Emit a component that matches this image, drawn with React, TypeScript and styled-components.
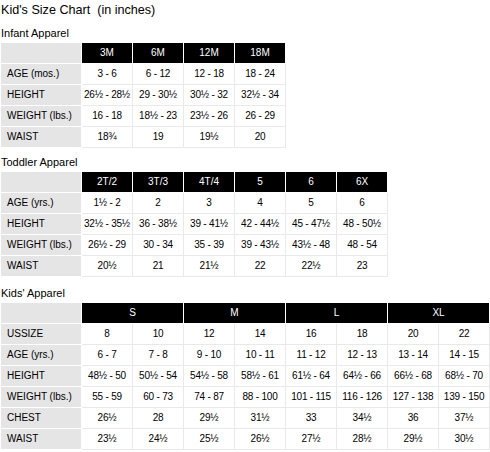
import React from 'react'
import styled, { createGlobalStyle } from 'styled-components';

const GlobalStyle = createGlobalStyle`
  body {
    margin: 0;
    background: #fff;
    font-family: "Liberation Sans", Arial, sans-serif;
    color: #000;
  }
`

const Page = styled.div`
  width: 490px;
`

const Title = styled.h1`
  margin: 0;
  padding: 3px 0 0 1px;
  font-size: 12.6px;
  font-weight: normal;
  line-height: 15px;
  white-space: pre;
`

const Section = styled.section`
  margin-top: ${(p: { $gap: number }) => p.$gap}px;
`

const SectionLabel = styled.div`
  font-size: 11px;
  line-height: 13px;
  padding-left: 1px;
  margin-bottom: 2px;
`

const Chart = styled.table`
  border-collapse: separate;
  border-spacing: 1px;
  table-layout: fixed;
  background: #fff;
  font-size: 10px;
`

const Cell = styled.td`
  height: 20px;
  padding: 0;
  line-height: 20px;
  white-space: nowrap;
  overflow: hidden;
`

const CornerCell = styled(Cell)`
  background: #e5e5e5;
`

const HeadCell = styled(Cell)`
  background: #000;
  color: #fff;
  text-align: center;
`

const LabelCell = styled(Cell)`
  background: #e5e5e5;
  padding-left: 6px;
`

const DataCell = styled(Cell)`
  background: #fff;
  text-align: center;
  letter-spacing: -0.2px;
  box-shadow: 1px 0 0 #e9e9e9, 0 1px 0 #e9e9e9, 1px 1px 0 #e9e9e9;
`

interface ChartRow {
  label: string;
  values: string[];
}

interface SizeChartProps {
  title: string;
  gap: number;
  sizes: string[];
  span?: number;
  rows: ChartRow[];
}

function SizeChart({ title, gap, sizes, span = 1, rows }: SizeChartProps) {
  const cols = sizes.length * span
  return (
    <Section $gap={gap}>
      <SectionLabel>{title}</SectionLabel>
      <Chart style={{ width: 1 + 81 + 51 * cols }}>
        <colgroup>
          <col style={{ width: 80 }} />
          {Array.from({ length: cols }).map((_, i) => <col key={i} style={{ width: 50 }} />)}
        </colgroup>
        <tbody>
          <tr>
            <CornerCell />
            {sizes.map((s) => <HeadCell key={s} colSpan={span}>{s}</HeadCell>)}
          </tr>
          {rows.map((row) => (
            <tr key={row.label}>
              <LabelCell>{row.label}</LabelCell>
              {row.values.map((v, i) => <DataCell key={i}>{v}</DataCell>)}
            </tr>
          ))}
        </tbody>
      </Chart>
    </Section>
  )
}

const infant: ChartRow[] = [
  { label: 'AGE (mos.)', values: ['3 - 6', '6 - 12', '12 - 18', '18 - 24'] },
  { label: 'HEIGHT', values: ['26½ - 28½', '29 - 30½', '30½ - 32', '32½ - 34'] },
  { label: 'WEIGHT (lbs.)', values: ['16 - 18', '18½ - 23', '23½ - 26', '26 - 29'] },
  { label: 'WAIST', values: ['18¾', '19', '19½', '20'] },
]

const toddler: ChartRow[] = [
  { label: 'AGE (yrs.)', values: ['1½ - 2', '2', '3', '4', '5', '6'] },
  { label: 'HEIGHT', values: ['32½ - 35½', '36 - 38½', '39 - 41½', '42 - 44½', '45 - 47½', '48 - 50½'] },
  { label: 'WEIGHT (lbs.)', values: ['26½ - 29', '30 - 34', '35 - 39', '39 - 43½', '43½ - 48', '48 - 54'] },
  { label: 'WAIST', values: ['20½', '21', '21½', '22', '22½', '23'] },
]

const kids: ChartRow[] = [
  { label: 'USSIZE', values: ['8', '10', '12', '14', '16', '18', '20', '22'] },
  { label: 'AGE (yrs.)', values: ['6 - 7', '7 - 8', '9 - 10', '10 - 11', '11 - 12', '12 - 13', '13 - 14', '14 - 15'] },
  { label: 'HEIGHT', values: ['48½ - 50', '50½ - 54', '54½ - 58', '58½ - 61', '61½ - 64', '64½ - 66', '66½ - 68', '68½ - 70'] },
  { label: 'WEIGHT (lbs.)', values: ['55 - 59', '60 - 73', '74 - 87', '88 - 100', '101 - 115', '116 - 126', '127 - 138', '139 - 150'] },
  { label: 'CHEST', values: ['26½', '28', '29½', '31½', '33', '34½', '36', '37½'] },
  { label: 'WAIST', values: ['23½', '24½', '25½', '26½', '27½', '28½', '29½', '30½'] },
]

export default function App() {
  return (
    <Page>
      <GlobalStyle />
      <Title>Kid's Size Chart  (in inches)</Title>
      <SizeChart title="Infant Apparel" gap={9} sizes={['3M', '6M', '12M', '18M']} rows={infant} />
      <SizeChart title="Toddler Apparel" gap={8} sizes={['2T/2', '3T/3', '4T/4', '5', '6', '6X']} rows={toddler} />
      <SizeChart title="Kids' Apparel" gap={10} sizes={['S', 'M', 'L', 'XL']} span={2} rows={kids} />
    </Page>
  )
}
